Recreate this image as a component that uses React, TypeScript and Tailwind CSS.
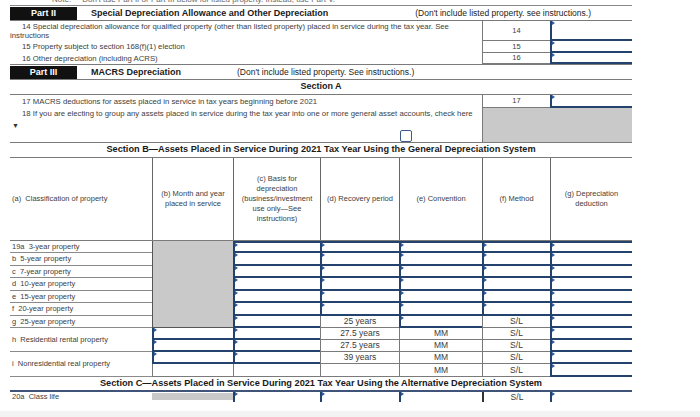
import React from "react";

// small blue flag drawn at the top-left corner of every entry field
function Marker() {
  return (
    <span className="absolute left-0 top-0 h-0 w-0 border-y-[2px] border-l-[3px] border-y-transparent border-l-[#2f5aa0]" />
  );
}

function Field({ top = false }: { top?: boolean }) {
  return (
    <div
      className={`relative border-b-2 border-l-2 border-[#24426e] ${top ? "border-t-2" : ""}`}
    >
      <Marker />
    </div>
  );
}

function Flag() {
  return (
    <div className="relative border-l-2 border-[#24426e]">
      <Marker />
    </div>
  );
}

function Txt({ children }: { children?: React.ReactNode }) {
  return (
    <div className="flex items-center justify-center border-b border-l border-[#7a7a7a] text-[8.5px] leading-none text-[#3a3a3a]">
      {children}
    </div>
  );
}

function Label({ children, span = false }: { children: React.ReactNode; span?: boolean }) {
  return (
    <div
      className={`flex items-center whitespace-pre border-b border-[#8a8a8a] pl-[2px] text-[7.5px] leading-none ${
        span ? "row-span-2" : ""
      }`}
    >
      {children}
    </div>
  );
}

function LineNo({ n }: { n: string }) {
  return (
    <div className="flex items-center justify-center border-b border-l border-[#7a7a7a] text-[7.5px] leading-none">
      {n}
    </div>
  );
}

function Amount() {
  return (
    <div className="relative border-b-2 border-l-2 border-[#24426e]">
      <Marker />
    </div>
  );
}

const cols = "grid grid-cols-[142px_81px_87px_79px_83px_68px_82px]";

export default function App() {
  const shortRows = [
    "19a  3-year property",
    "b  5-year property",
    "c  7-year property",
    "d  10-year property",
    "e  15-year property",
    "f  20-year property",
  ];

  return (
    <div className="relative h-[417px] w-[700px] overflow-hidden bg-white font-['Liberation_Sans',Arial,sans-serif] text-[#404040]">
      <div className="ml-[10px] w-[622px]">
        {/* cut off note from the line above */}
        <div className="h-[6px] overflow-hidden border-b border-[#8a8a8a]">
          <div className="-mt-[5px] whitespace-nowrap pl-[42px] text-[8px] leading-[9px] text-[#666]">
            Note:&nbsp;&nbsp;&nbsp;&nbsp;&nbsp;Don't use Part II or Part III below for listed property. Instead, use Part V.
          </div>
        </div>

        {/* Part II */}
        <div className="flex h-[15px] items-stretch border-b border-[#7a7a7a] pt-[1px]">
          <div className="flex w-[67px] items-center justify-center bg-[#111] text-[9px] font-bold text-white">
            Part II
          </div>
          <div className="ml-[14px] flex items-center text-[9px] font-bold text-[#1a1a1a]">
            Special Depreciation Allowance and Other Depreciation
          </div>
          <div className="ml-auto mr-[41px] flex items-center text-[8.5px] text-[#222]">
            (Don't include listed property. see instructions.)
          </div>
        </div>

        <div className="grid h-[20px] grid-cols-[472px_68px_82px]">
          <div className="pl-[12px] pt-[1px] text-[7.75px] leading-[9px]">
            14 Special depreciation allowance for qualified property (other than listed property) placed in service during the tax year. See
            <div className="-ml-[12px]">instructions</div>
          </div>
          <LineNo n="14" />
          <Amount />
        </div>
        <div className="grid h-[12px] grid-cols-[472px_68px_82px]">
          <div className="flex items-center pl-[12px] text-[7.75px] leading-none">
            15 Property subject to section 168(f)(1) election
          </div>
          <LineNo n="15" />
          <Amount />
        </div>
        <div className="grid h-[12px] grid-cols-[472px_68px_82px] border-b border-[#7a7a7a]">
          <div className="flex items-center pl-[12px] text-[7.75px] leading-none">
            16 Other depreciation (including ACRS)
          </div>
          <LineNo n="16" />
          <Amount />
        </div>

        {/* Part III */}
        <div className="flex h-[15px] items-stretch border-b border-[#7a7a7a] pt-[1px]">
          <div className="flex w-[67px] items-center justify-center bg-[#111] text-[9px] font-bold text-white">
            Part III
          </div>
          <div className="ml-[14px] flex w-[146px] items-center text-[9px] font-bold text-[#1a1a1a]">
            MACRS Depreciation
          </div>
          <div className="flex items-center text-[8.5px] text-[#222]">
            (Don't include listed property. See instructions.)
          </div>
        </div>
        <div className="flex h-[15px] items-center justify-center border-b border-[#7a7a7a] text-[9px] font-bold text-[#1a1a1a]">
          Section A
        </div>

        <div className="grid h-[13px] grid-cols-[472px_68px_82px]">
          <div className="flex items-center pl-[12px] text-[7.75px] leading-none">
            17 MACRS deductions for assets placed in service in tax years beginning before 2021
          </div>
          <LineNo n="17" />
          <Amount />
        </div>
        <div className="grid h-[35px] grid-cols-[472px_150px] border-b border-[#7a7a7a]">
          <div className="flex flex-col">
            <div className="pl-[12px] pt-[1px] text-[7.75px] leading-[9px]">
              18 If you are electing to group any assets placed in service during the tax year into one or more general asset accounts, check here
            </div>
            <div className="ml-[2px] mt-[4px] text-[7px] leading-none text-[#333]">▼</div>
            <div className="ml-[390px] mt-auto h-[12px] w-[12px] rounded-[2px] border-[1.5px] border-[#3c5a8a]" />
          </div>
          <div className="border-l border-[#7a7a7a] bg-[#c9c9c9]" />
        </div>

        {/* Section B */}
        <div className="flex h-[15px] items-center justify-center border-b border-[#7a7a7a] text-[9.2px] font-bold text-[#1a1a1a]">
          Section B—Assets Placed in Service During 2021 Tax Year Using the General Depreciation System
        </div>

        <div className={`${cols} h-[83px] border-b border-[#7a7a7a] text-[7.5px] leading-[10px]`}>
          <div className="flex items-center whitespace-pre pl-[2px]">(a)  Classification of property</div>
          <div className="flex items-center justify-center border-l border-[#666] text-center">
            (b) Month and year
            <br />
            placed in service
          </div>
          <div className="flex items-center justify-center border-l border-[#666] text-center">
            (c) Basis for
            <br />
            depreciation
            <br />
            (business/investment
            <br />
            use only—See
            <br />
            instructions)
          </div>
          <div className="flex items-center justify-center border-l border-[#666] text-center">(d) Recovery period</div>
          <div className="flex items-center justify-center border-l border-[#666] text-center">(e) Convention</div>
          <div className="flex items-center justify-center border-l border-[#666] text-center">(f) Method</div>
          <div className="flex items-center justify-center border-l border-[#666] text-center">
            (g) Depreciation
            <br />
            deduction
          </div>
        </div>

        <div className={`${cols} grid-rows-[12px_13px_12px_13px_12px_13px_12px_12px_12px_12px_13px]`}>
          {shortRows.map((label, i) => (
            <React.Fragment key={label}>
              <Label>{label}</Label>
              {i === 0 && (
                <div className="row-span-7 border-b border-l border-[#555] bg-[#c9c9c9]" />
              )}
              <Field top={i === 0} />
              <Field top={i === 0} />
              <Field top={i === 0} />
              <Field top={i === 0} />
              <Field top={i === 0} />
            </React.Fragment>
          ))}

          <Label>g  25-year property</Label>
          <Field />
          <Txt>25 years</Txt>
          <Field />
          <Txt>S/L</Txt>
          <Field />

          <Label span>h  Residential rental property</Label>
          <Field />
          <Field />
          <Txt>27.5 years</Txt>
          <Txt>MM</Txt>
          <Txt>S/L</Txt>
          <Field />

          <Field />
          <Field />
          <Txt>27.5 years</Txt>
          <Txt>MM</Txt>
          <Txt>S/L</Txt>
          <Field />

          <Label span>i  Nonresidential real property</Label>
          <Field />
          <Field />
          <Txt>39 years</Txt>
          <Txt>MM</Txt>
          <Txt>S/L</Txt>
          <Field />

          <Txt />
          <Txt />
          <Txt />
          <Txt>MM</Txt>
          <Txt>S/L</Txt>
          <Field />
        </div>

        {/* Section C */}
        <div className="flex h-[15px] items-center justify-center border-b-2 border-[#3f5478] text-[9.2px] font-bold text-[#1a1a1a]">
          Section C—Assets Placed in Service During 2021 Tax Year Using the Alternative Depreciation System
        </div>
        <div className={`${cols} h-[10px]`}>
          <div className="flex items-center whitespace-pre pl-[2px] text-[7.5px] leading-none">20a  Class life</div>
          <div className="mb-[2px] mt-[1px] bg-[#c9c9c9]" />
          <Flag />
          <Flag />
          <Flag />
          <div className="flex items-center justify-center border-l-2 border-[#333] text-[8.5px] leading-none text-[#3a3a3a]">
            S/L
          </div>
          <Flag />
        </div>
      </div>
      <div className="mt-[9px] h-[6px] w-full bg-[#f3f3f3]" />
    </div>
  );
}
